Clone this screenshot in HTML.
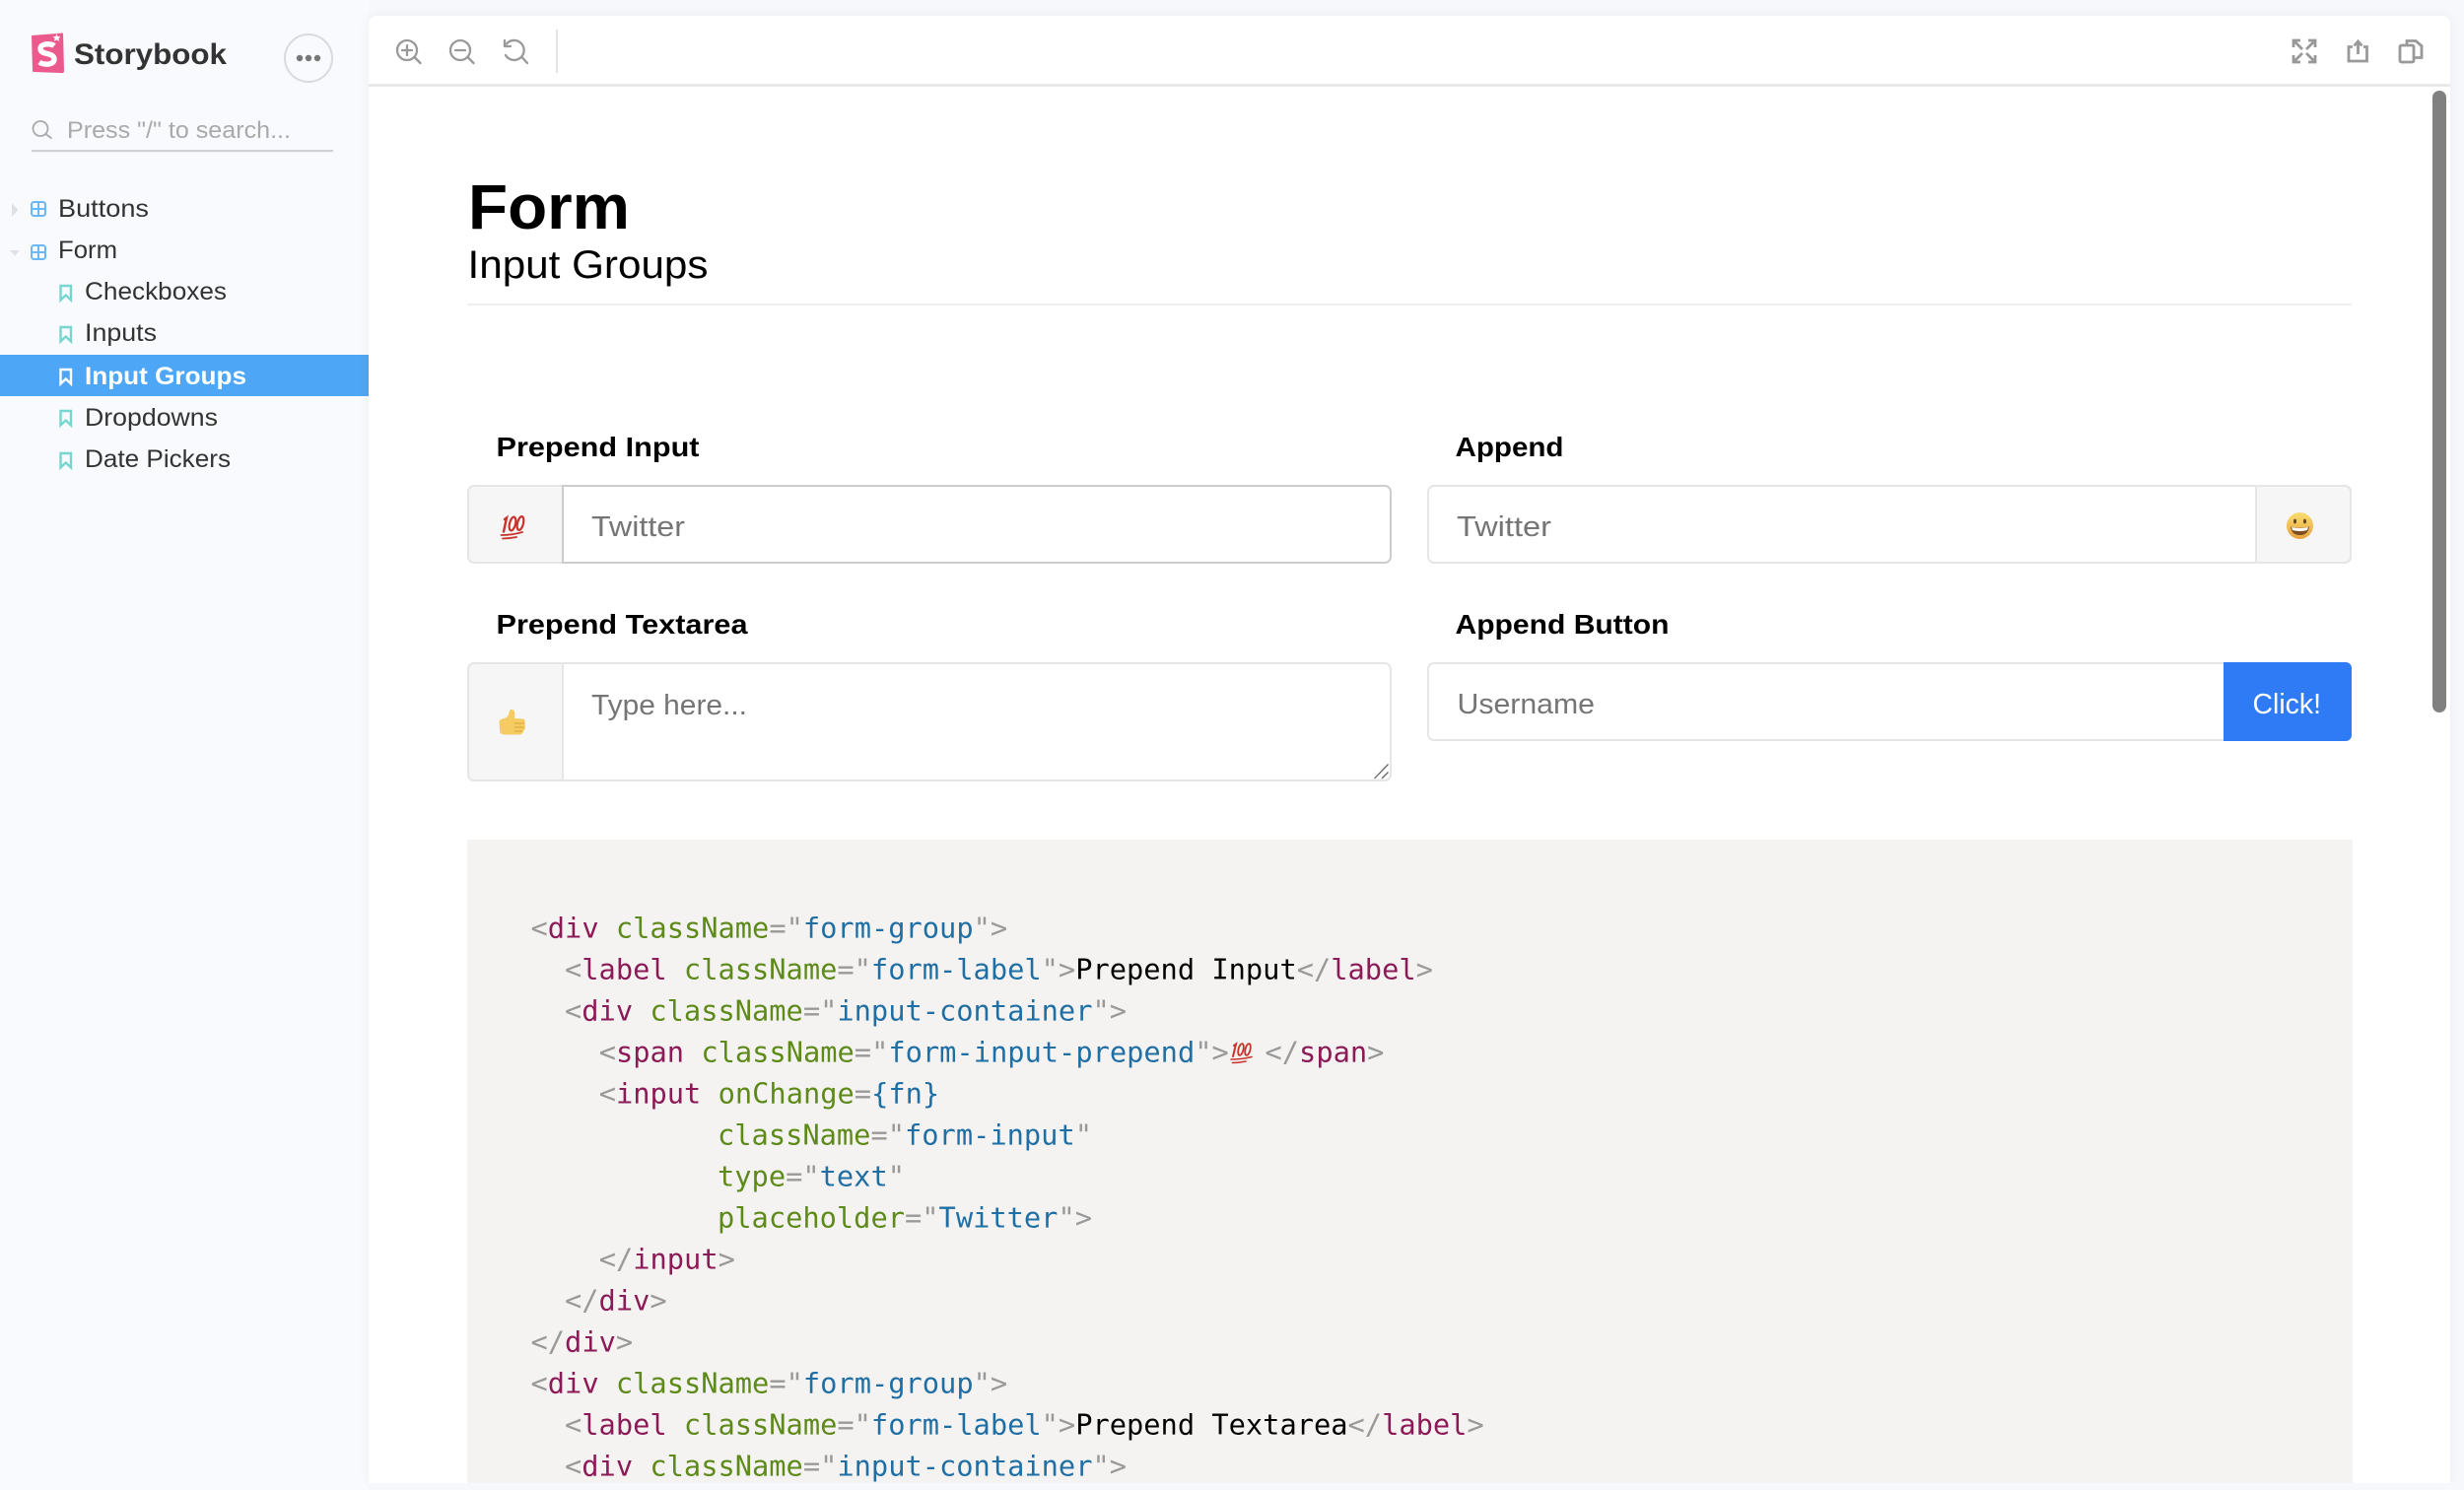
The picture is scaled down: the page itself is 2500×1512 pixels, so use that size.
<!DOCTYPE html>
<html lang="en">
<head>
<meta charset="utf-8">
<title>Storybook - Form / Input Groups</title>
<style>
html,body{margin:0;padding:0;width:2500px;height:1512px;overflow:hidden;background:#f6f8fb}
.abs{position:absolute;box-sizing:border-box}
#sidebar{left:0;top:0;width:374px;height:1512px;background:#f8fafd}
#panel{left:374px;top:16px;width:2112px;height:1489px;background:#fff;border-radius:8px 8px 0 0;box-shadow:0 0 12px rgba(0,0,0,.05)}
#tb{left:374px;top:85px;width:2112px;height:3px;background:#e9e9e9}
#active{left:0;top:360px;width:374px;height:42px;background:#4ea7f6}
#hr{left:474px;top:308px;width:1912px;height:2px;background:#efefef}
.box{border:2px solid #e6e6e6;border-radius:7px;background:#fff}
.add{background:#f6f6f6}
#code{left:474px;top:852px;width:1913px;height:653px;background:#f4f3f2}
#btn{left:2256px;top:672px;width:130px;height:80px;background:#2f7bf6;border-radius:0 6px 6px 0}
#scroll{left:2468px;top:92px;width:14px;height:631px;background:#808080;border-radius:7px}
svg{position:absolute;left:0;top:0}
text{font-family:"Liberation Sans",Arial,sans-serif;white-space:pre}
.s{font-size:25px;fill:#333}
.l{font-size:28px;font-weight:700;fill:#000}
.i{font-size:29px;fill:#757575}
.c{font-family:"DejaVu Sans Mono","Liberation Mono",monospace;font-size:28.7px;fill:#000}
.t{fill:#8b1a57}.a{fill:#5e8a1a}.v{fill:#1f6fa5}.p{fill:#999}
.g{fill:none;stroke:#999;stroke-width:2.300;stroke-linecap:round;stroke-linejoin:round}
.f{fill:none;stroke:#6db7f5;stroke-width:2}
.b{fill:none;stroke:#78d6cf;stroke-width:2.400}
</style>
</head>
<body>
<div class="abs" id="sidebar"></div>
<div class="abs" id="active"></div>
<div class="abs" id="panel"></div>
<div class="abs" id="tb"></div>
<div class="abs" id="hr"></div>

<div class="abs box" style="left:474px;top:492px;width:98px;height:80px;border-radius:7px 0 0 7px;background:#f6f6f6;border-right:0"></div>
<div class="abs box" style="left:570px;top:492px;width:842px;height:80px;border-color:#cdcdcd;border-radius:0 7px 7px 0"></div>
<div class="abs box" style="left:1448px;top:492px;width:938px;height:80px"></div>
<div class="abs box add" style="left:2288px;top:492px;width:98px;height:80px;border-radius:0 7px 7px 0"></div>
<div class="abs box" style="left:474px;top:672px;width:938px;height:121px"></div>
<div class="abs box add" style="left:474px;top:672px;width:98px;height:121px;border-radius:7px 0 0 7px"></div>
<div class="abs box" style="left:1448px;top:672px;width:812px;height:80px;border-radius:7px 0 0 7px"></div>
<div class="abs" id="btn"></div>
<div class="abs" id="code"></div>
<div class="abs" id="scroll"></div>

<svg width="2500" height="1512" viewBox="0 0 2500 1512" xmlns="http://www.w3.org/2000/svg">
  <!-- logo -->
  <path d="M32 36 L64 33.500 L65 72 Q65 74.500 62 74 L34 73 Q33 73 33 71 Z" fill="#ea5a8d"/>
  <path d="M57.500 34 l1 3 l3 .2 l-2 1.800 l.7 3 l-2.700-1.600 l-2.500 1.600 l.7-3 l-2.200-1.800 l3-.2 Z" fill="#fff"/>
  <path d="M55 46.500 C52 44 41 43.500 41 49.500 C41 56 55 53 55 60 C55 66.500 44 66 40 63" fill="none" stroke="#fff" stroke-width="5.400"/>
  <text x="75" y="65" font-size="30" font-weight="700" fill="#333" textLength="155" lengthAdjust="spacingAndGlyphs">Storybook</text>
  <circle cx="313" cy="59" r="24" fill="none" stroke="#d9dadd" stroke-width="2"/>
  <circle cx="304" cy="59" r="3.200" fill="#777"/><circle cx="313" cy="59" r="3.200" fill="#777"/><circle cx="322" cy="59" r="3.200" fill="#777"/>

  <!-- search -->
  <circle cx="41" cy="130.500" r="7.500" fill="none" stroke="#aaa" stroke-width="1.800"/>
  <path d="M46.500 136 L52.500 140.500" stroke="#aaa" stroke-width="1.800" fill="none"/>
  <text x="68" y="140" font-size="24" fill="#aaa" textLength="227" lengthAdjust="spacingAndGlyphs">Press "/" to search...</text>
  <rect x="32" y="152" width="306" height="2.200" fill="#cfd0d3"/>

  <!-- tree -->
  <path d="M12 206 L18.500 213 L12 220 Z" fill="#dfe1e4"/>
  <path d="M10 254 L20 254 L15 259.500 Z" fill="#dfe1e4"/>
  <g class="f">
    <rect x="32" y="205" width="14" height="14" rx="2.500"/><path d="M39 205 V219 M32 212 H46"/>
    <rect x="32" y="249" width="14" height="14" rx="2.500"/><path d="M39 249 V263 M32 256 H46"/>
  </g>
  <g class="b">
    <path d="M61.500 290 H72 V304.500 L66.750 299.500 L61.500 304.500 Z"/>
    <path d="M61.500 332 H72 V346.500 L66.750 341.500 L61.500 346.500 Z"/>
    <path d="M61.500 417 H72 V431.500 L66.750 426.500 L61.500 431.500 Z"/>
    <path d="M61.500 460 H72 V474.500 L66.750 469.500 L61.500 474.500 Z"/>
  </g>
  <path d="M61.500 375 H72 V389.500 L66.750 384.500 L61.500 389.500 Z" fill="none" stroke="#fff" stroke-width="2.400"/>
  <text class="s" x="59" y="220" textLength="92" lengthAdjust="spacingAndGlyphs">Buttons</text>
  <text class="s" x="59" y="262" textLength="60" lengthAdjust="spacingAndGlyphs">Form</text>
  <text class="s" x="86" y="304" textLength="144" lengthAdjust="spacingAndGlyphs">Checkboxes</text>
  <text class="s" x="86" y="346" textLength="73" lengthAdjust="spacingAndGlyphs">Inputs</text>
  <text class="s" x="86" y="390" textLength="164" lengthAdjust="spacingAndGlyphs" style="fill:#fff;font-weight:700">Input Groups</text>
  <text class="s" x="86" y="432" textLength="135" lengthAdjust="spacingAndGlyphs">Dropdowns</text>
  <text class="s" x="86" y="474" textLength="148" lengthAdjust="spacingAndGlyphs">Date Pickers</text>

  <!-- toolbar -->
  <g class="g">
    <circle cx="413" cy="51" r="10"/><path d="M420.500 58 L426.500 64 M408 51 H418 M413 46 V56"/>
    <circle cx="467" cy="51" r="10"/><path d="M474.500 58 L480.500 64 M462 51 H472"/>
    <path d="M514 44.500 A10 10 0 1 1 513 56"/><path d="M529.500 58 L535 64"/>
    <path d="M512 41 V47 H518"/>
  </g>
  <rect x="564" y="30" width="2" height="44" fill="#e4e4e4"/>
  <g fill="none" stroke="#999" stroke-width="2.800">
    <path d="M2327 48 V41 H2334 M2328 42 L2336 50"/>
    <path d="M2342 41 H2349 V48 M2348 42 L2340 50"/>
    <path d="M2327 56 V63 H2334 M2328 62 L2336 54"/>
    <path d="M2342 63 H2349 V56 M2348 62 L2340 54"/>
    <path d="M2387 47.500 H2383 V62 H2401.500 V47.500 H2398"/>
    <path d="M2392.500 55 V43 M2388.500 46.500 L2392.500 42 L2396.500 46.500"/>
    <rect x="2435" y="46" width="14" height="17" rx="1.500"/>
    <path d="M2442 46 V41.500 H2451 L2457 46.500 V58.500 H2449"/>
  </g>

  <!-- heading -->
  <text x="475" y="232" font-size="64" font-weight="700" fill="#000" textLength="164" lengthAdjust="spacingAndGlyphs">Form</text>
  <text x="474.500" y="282" font-size="40" fill="#000" textLength="244" lengthAdjust="spacingAndGlyphs">Input Groups</text>

  <!-- form labels -->
  <text class="l" x="503.500" y="463" textLength="206" lengthAdjust="spacingAndGlyphs">Prepend Input</text>
  <text class="l" x="1476.500" y="463" textLength="110" lengthAdjust="spacingAndGlyphs">Append</text>
  <text class="l" x="503.500" y="643" textLength="255" lengthAdjust="spacingAndGlyphs">Prepend Textarea</text>
  <text class="l" x="1476.500" y="643" textLength="217" lengthAdjust="spacingAndGlyphs">Append Button</text>

  <!-- field text -->
  <text class="i" x="600" y="544" textLength="95" lengthAdjust="spacingAndGlyphs">Twitter</text>
  <text class="i" x="1478" y="544" textLength="96" lengthAdjust="spacingAndGlyphs">Twitter</text>
  <text class="i" x="600" y="725" textLength="158" lengthAdjust="spacingAndGlyphs">Type here...</text>
  <text class="i" x="1478.500" y="724" textLength="139.500" lengthAdjust="spacingAndGlyphs">Username</text>
  <text class="i" x="2285.500" y="724" textLength="69.500" lengthAdjust="spacingAndGlyphs" style="fill:#fff">Click!</text>

  <!-- 100 emoji -->
  <g fill="none" stroke="#c9332c" stroke-linecap="round">
    <path d="M512 527 L514 525.500 L511 539.500" stroke-width="2.400"/>
    <ellipse cx="520" cy="531.500" rx="3" ry="7" transform="rotate(14 520 531.500)" stroke-width="2.200"/>
    <ellipse cx="528" cy="531" rx="3" ry="7" transform="rotate(14 528 531)" stroke-width="2.200"/>
    <path d="M508.500 543 Q520 543 530 540 M510 546.500 Q517 546.500 524 545" stroke-width="1.800"/>
  </g>

  <!-- thumbs up emoji -->
  <path d="M506.500 732.500 Q507 729.500 512 729 Q516.500 727 517 721 Q518.500 719 521 720.500 Q523 723 522 729 L531 729.500 Q533.500 731 532.500 735 Q533.500 740 531 742 Q530 745.500 527 745.500 L512 745.500 Q507 745.500 507 741 Z" fill="#f5cc62"/>
  <path d="M522 734 H532 M522 738 H532 M522 742 H530" stroke="#dca53c" stroke-width="1" fill="none"/>

  <!-- grin emoji -->
  <defs>
    <linearGradient id="gr" x1="0" y1="0" x2="0" y2="1">
      <stop offset="0" stop-color="#f9de70"/>
      <stop offset="1" stop-color="#e9a13c"/>
    </linearGradient>
  </defs>
  <circle cx="2333.500" cy="533.500" r="13.500" fill="url(#gr)"/>
  <ellipse cx="2328.500" cy="529" rx="1.500" ry="2.400" fill="#5f4520"/>
  <ellipse cx="2338.500" cy="529" rx="1.500" ry="2.400" fill="#5f4520"/>
  <path d="M2324 534.500 Q2333.500 537 2343 534.500 Q2342 543 2333.500 543 Q2325 543 2324 534.500 Z" fill="#7d4f20"/>
  <path d="M2325 535 Q2333.500 537 2342 535 L2341 538 Q2333.500 540 2326 538 Z" fill="#fff"/>

  <!-- textarea resize handle -->
  <path d="M1394.500 790 L1408.500 775.500 M1402 790 L1408.500 783.500" stroke="#666" stroke-width="1.300" fill="none"/>

  <!-- code -->
  <g class="c">
    <text class="c" x="538.500" y="951.500"><tspan class="p">&lt;</tspan><tspan class="t">div</tspan> <tspan class="a">className</tspan><tspan class="p">="</tspan><tspan class="v">form-group</tspan><tspan class="p">"&gt;</tspan></text>
    <text class="c" x="573" y="993.500"><tspan class="p">&lt;</tspan><tspan class="t">label</tspan> <tspan class="a">className</tspan><tspan class="p">="</tspan><tspan class="v">form-label</tspan><tspan class="p">"&gt;</tspan>Prepend Input<tspan class="p">&lt;/</tspan><tspan class="t">label</tspan><tspan class="p">&gt;</tspan></text>
    <text class="c" x="573" y="1035.500"><tspan class="p">&lt;</tspan><tspan class="t">div</tspan> <tspan class="a">className</tspan><tspan class="p">="</tspan><tspan class="v">input-container</tspan><tspan class="p">"&gt;</tspan></text>
    <text class="c" x="607.700" y="1077.500"><tspan class="p">&lt;</tspan><tspan class="t">span</tspan> <tspan class="a">className</tspan><tspan class="p">="</tspan><tspan class="v">form-input-prepend</tspan><tspan class="p">"&gt;</tspan></text>
    <g fill="none" stroke="#c9332c" stroke-linecap="round">
      <path d="M1252 1061 L1254 1059.500 L1251 1072" stroke-width="2"/>
      <ellipse cx="1259" cy="1065" rx="2.500" ry="6" transform="rotate(14 1259 1065)" stroke-width="1.800"/>
      <ellipse cx="1266" cy="1065" rx="2.500" ry="6" transform="rotate(14 1266 1065)" stroke-width="1.800"/>
      <path d="M1249 1075 Q1260 1075 1270 1072.500 M1250.500 1078.500 Q1257 1078.500 1264 1077" stroke-width="1.600"/>
    </g>
    <text class="c" x="1283.500" y="1077.500"><tspan class="p">&lt;/</tspan><tspan class="t">span</tspan><tspan class="p">&gt;</tspan></text>
    <text class="c" x="607.700" y="1119.500"><tspan class="p">&lt;</tspan><tspan class="t">input</tspan> <tspan class="a">onChange</tspan><tspan class="p">=</tspan><tspan class="v">{fn}</tspan></text>
    <text class="c" x="728" y="1161.500"><tspan class="a">className</tspan><tspan class="p">="</tspan><tspan class="v">form-input</tspan><tspan class="p">"</tspan></text>
    <text class="c" x="728" y="1203.500"><tspan class="a">type</tspan><tspan class="p">="</tspan><tspan class="v">text</tspan><tspan class="p">"</tspan></text>
    <text class="c" x="728" y="1245.500"><tspan class="a">placeholder</tspan><tspan class="p">="</tspan><tspan class="v">Twitter</tspan><tspan class="p">"&gt;</tspan></text>
    <text class="c" x="607.700" y="1287.500"><tspan class="p">&lt;/</tspan><tspan class="t">input</tspan><tspan class="p">&gt;</tspan></text>
    <text class="c" x="573" y="1329.500"><tspan class="p">&lt;/</tspan><tspan class="t">div</tspan><tspan class="p">&gt;</tspan></text>
    <text class="c" x="538.500" y="1371.500"><tspan class="p">&lt;/</tspan><tspan class="t">div</tspan><tspan class="p">&gt;</tspan></text>
    <text class="c" x="538.500" y="1413.500"><tspan class="p">&lt;</tspan><tspan class="t">div</tspan> <tspan class="a">className</tspan><tspan class="p">="</tspan><tspan class="v">form-group</tspan><tspan class="p">"&gt;</tspan></text>
    <text class="c" x="573" y="1455.500"><tspan class="p">&lt;</tspan><tspan class="t">label</tspan> <tspan class="a">className</tspan><tspan class="p">="</tspan><tspan class="v">form-label</tspan><tspan class="p">"&gt;</tspan>Prepend Textarea<tspan class="p">&lt;/</tspan><tspan class="t">label</tspan><tspan class="p">&gt;</tspan></text>
    <text class="c" x="573" y="1497.500"><tspan class="p">&lt;</tspan><tspan class="t">div</tspan> <tspan class="a">className</tspan><tspan class="p">="</tspan><tspan class="v">input-container</tspan><tspan class="p">"&gt;</tspan></text>
  </g>
  <rect x="374" y="1505" width="2126" height="7" fill="#f6f8fb"/>
</svg>
</body>
</html>
